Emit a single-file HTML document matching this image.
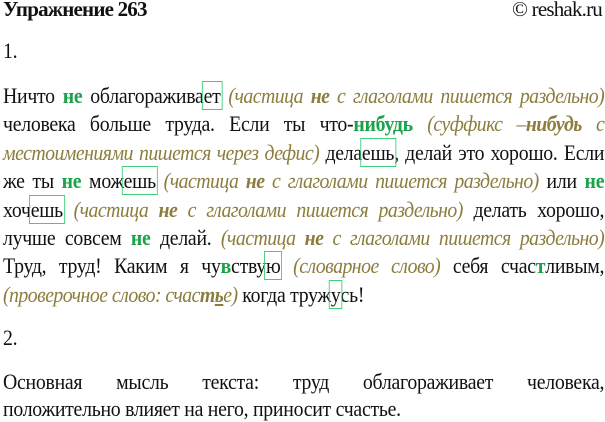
<!DOCTYPE html>
<html><head><meta charset="utf-8"><style>
body{margin:0;width:605px;height:418px;background:#fff;overflow:hidden;font-family:"Liberation Serif",serif;color:#111;}
.h{position:absolute;top:-3px;font-size:21px;font-weight:bold;left:3px;letter-spacing:-0.8px}
.r{position:absolute;top:-3px;right:3px;font-size:21px;letter-spacing:-0.8px}
.l{position:absolute;left:3px;width:668px;transform:scaleX(0.9);transform-origin:0 0;font-size:22px;line-height:26px;text-align:justify;text-align-last:justify;white-space:nowrap;letter-spacing:-0.3px}
.l.n{text-align-last:left}
.c{color:#8c7d3e;font-style:italic;letter-spacing:-0.6px}
.g{color:#1aa34a;font-weight:bold}
.b{outline:1px solid #3fcf7a;outline-offset:1px;}
</style></head><body>
<div class="h">Упражнение 263</div>
<div class="r">© reshak.ru</div>
<div class="l n" style="top:38px">1.</div>
<div class="l" style="top:83px">Ничто <span class="g">не</span> облагоражива<span class="b">ет</span> <span class="c">(частица <b>не</b> с глаголами пишется раздельно)</span></div>
<div class="l" style="top:111px">человека больше труда. Если ты что-<span class="g">нибудь</span> <span class="c">(суффикс –<b>нибудь</b> с</span></div>
<div class="l" style="top:140px"><span class="c">местоимениями пишется через дефис)</span> дела<span class="b">ешь</span>, делай это хорошо. Если</div>
<div class="l" style="top:168px">же ты <span class="g">не</span> мож<span class="b">ешь</span> <span class="c">(частица <b>не</b> с глаголами пишется раздельно)</span> или <span class="g">не</span></div>
<div class="l" style="top:197px">хоч<span class="b">ешь</span> <span class="c">(частица <b>не</b> с глаголами пишется раздельно)</span> делать хорошо,</div>
<div class="l" style="top:225px">лучше совсем <span class="g">не</span> делай. <span class="c">(частица <b>не</b> с глаголами пишется раздельно)</span></div>
<div class="l" style="top:253px">Труд, труд! Каким я чу<span class="g">в</span>ству<span class="b">ю</span> <span class="c">(словарное слово)</span> себя счас<span class="g">т</span>ливым,</div>
<div class="l n" style="top:282px"><span class="c">(проверочное слово: счас<b>т<u>ь</u></b>е)</span> когда труж<span class="b">у</span>сь!</div>
<div class="l n" style="top:325px">2.</div>
<div class="l" style="top:369px">Основная мысль текста: труд облагораживает человека,</div>
<div class="l n" style="top:396px">положительно влияет на него, приносит счастье.</div>
</body></html>
